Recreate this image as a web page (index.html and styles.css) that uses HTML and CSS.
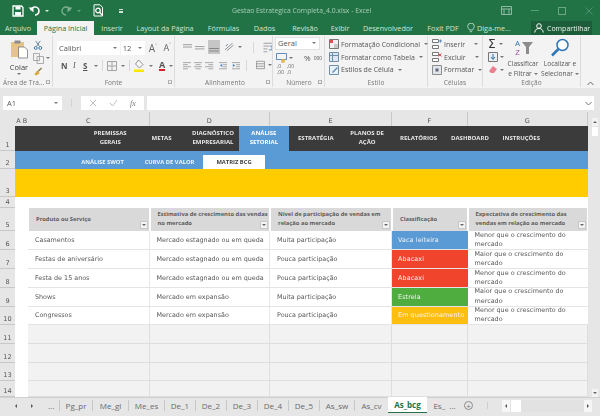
FILE: index.html
```html
<!DOCTYPE html>
<html lang="pt">
<head>
<meta charset="utf-8">
<title>Gestao Estrategica Completa_4.0.xlsx - Excel</title>
<link rel="stylesheet" href="styles.css">
</head>
<body>
<div class="app">
  <header class="titlebar">
    <div class="qat">
      <svg width="12" height="12" viewBox="0 0 12 12"><path d="M1 1h8.500L11 2.500V11H1z" fill="none" stroke="#fff" stroke-width="1.300"/><path d="M3.500 1.500h5v3h-5zM3 7h6v3.500H3z" fill="#fff"/></svg>
      <svg width="13" height="12" viewBox="0 0 13 12"><path d="M3 5.500A4 4 0 1 1 7 10" fill="none" stroke="#fff" stroke-width="1.600"/><path d="M.5 2.500h5v5z" fill="#fff"/></svg>
      <i class="caret w"></i>
      <svg class="dim" width="13" height="12" viewBox="0 0 13 12"><path d="M10 5.500A4 4 0 1 0 6 10" fill="none" stroke="#7fb093" stroke-width="1.400"/><path d="M12.500 2.500h-5v5z" fill="#7fb093"/></svg>
      <i class="caret d"></i>
      <svg width="12" height="13" viewBox="0 0 12 13"><path d="M2 .8h6l2.500 2.500V12H2z" fill="none" stroke="#fff"/><circle cx="6" cy="6.500" r="2.300" fill="none" stroke="#fff" stroke-width="1.200"/><path d="M7.500 8l2.500 3" stroke="#fff" stroke-width="1.200"/></svg>
      <span class="custom"></span>
    </div>
    <div class="doc">Gestao Estrategica Completa_4.0.xlsx - Excel</div>
    <div class="winctl">
      <svg width="11" height="9" viewBox="0 0 11 9"><path d="M.5.500h10v8H.5zM.5 3h10M3 3v5.500M8 3v5.500" fill="none" stroke="#8fbaa2"/></svg>
      <span class="min"></span>
      <span class="max"></span>
      <svg width="8" height="8" viewBox="0 0 8 8"><path d="M.5.500l7 7M7.500.500l-7 7" stroke="#4f9070"/></svg>
    </div>
  </header>

  <nav class="tabs">
    <span class="tab file">Arquivo</span>
    <span class="tab active">Página Inicial</span>
    <span class="tab tw36">Inserir</span>
    <span class="tab tw70">Layout da Página</span>
    <span class="tab tw47">Fórmulas</span>
    <span class="tab tw35">Dados</span>
    <span class="tab tw46">Revisão</span>
    <span class="tab tw24">Exibir</span>
    <span class="tab tw72">Desenvolvedor</span>
    <span class="tab tw38">Foxit PDF</span>
    <span class="tab tell">
      <svg width="8" height="10" viewBox="0 0 8 10"><path d="M2.500 7C2 5.500.7 5 .7 3.400a3.300 3.300 0 0 1 6.600 0C7.300 5 6 5.500 5.500 7zM2.800 8.700h2.400" fill="none" stroke="#d5e6dc" stroke-width=".8"/></svg>
      Diga-me...
    </span>
    <span class="share">
      <svg width="11" height="10" viewBox="0 0 11 10"><circle cx="5" cy="3" r="2.300" fill="none" stroke="#fff"/><path d="M.7 9.500c.5-3 2-4 4.300-4s3.800 1 4.300 4" fill="none" stroke="#fff"/></svg>
      Compartilhar
    </span>
  </nav>

  <section class="ribbon">
    <div class="group g-clip">
      <div class="gbody clipbody">
        <div class="paste">
          <svg width="19" height="20" viewBox="0 0 19 20"><path d="M1 3h13v15H1z" fill="#e5c587"/><path d="M4.500 1.500h6v3h-6z" fill="#8c8c8c"/><path d="M8.500 8h6l3 3v8h-9z" fill="#fff" stroke="#777" stroke-width=".8"/></svg>
          <span>Colar</span>
          <i class="caret"></i>
        </div>
        <div class="cliptools">
          <svg width="10" height="11" viewBox="0 0 10 11"><path d="M2.500 1l4 6M7.500 1l-4 6" stroke="#5e7c94" stroke-width="1"/><circle cx="2.500" cy="8.800" r="1.600" fill="none" stroke="#2f6f9f"/><circle cx="7.500" cy="8.800" r="1.600" fill="none" stroke="#2f6f9f"/></svg>
          <span class="tool"><svg width="11" height="11" viewBox="0 0 11 11"><path d="M.5.500h6v7h-6zM4 3.500h6.500v7H4z" fill="#f4f4f4" stroke="#9a9a9a" stroke-width=".8"/></svg><i class="caret"></i></span>
          <svg width="10" height="10" viewBox="0 0 10 10"><path d="M5 5l4-4" stroke="#8a7a50" stroke-width="1.500"/><path d="M1 8l3-4 3 3-4 2.500z" fill="#d9a93c"/></svg>
        </div>
      </div>
      <div class="glabel">Área de Tra...<i class="launch"></i></div>
    </div>

    <div class="group g-font">
      <div class="gbody fontbody">
        <div class="row">
          <span class="combo fname">Calibri<i class="caret"></i></span>
          <span class="combo fsize">12<i class="caret"></i></span>
          <span class="grow">A<sup>˄</sup></span>
          <span class="shrink">A<sup>˅</sup></span>
        </div>
        <div class="row fmt">
          <b class="n">N</b><em class="i">I</em><u class="s">S</u><i class="caret"></i>
          <span class="vsep"></span>
          <svg width="10" height="10" viewBox="0 0 10 10"><path d="M.5.500h9v9h-9zM5 .5v9M.5 5h9" fill="none" stroke="#a3a3a3"/></svg><i class="caret"></i>
          <span class="vsep"></span>
          <svg width="11" height="13" viewBox="0 0 11 13"><path d="M4.500 1L9 5.500 5.500 9 1.500 5z" fill="#f7f7f7" stroke="#777" stroke-width=".8"/><path d="M0 10.500h10V13H0z" fill="#ffe600"/></svg><i class="caret"></i>
          <span class="fcolor">A</span><i class="caret"></i>
        </div>
      </div>
      <div class="glabel">Fonte<i class="launch"></i></div>
    </div>

    <div class="group g-align">
      <div class="gbody alignbody">
        <div class="row a1">
          <svg class="al" width="10" height="9" viewBox="0 0 10 9"><path d="M0 1.500h10M0 4h10" stroke="#9a9a9a"/></svg>
          <svg class="al" width="10" height="9" viewBox="0 0 10 9"><path d="M0 3.500h10M0 6h10" stroke="#9a9a9a"/></svg>
          <span class="sel"><svg width="10" height="9" viewBox="0 0 10 9"><path d="M0 5.500h10M0 8h10" stroke="#888"/></svg></span>
          <svg class="orient" width="11" height="10" viewBox="0 0 11 10"><path d="M1 8l8-7M3 9l7-6" stroke="#8c8c8c"/><path d="M2 4l2-2" stroke="#5f7f9f"/></svg><i class="caret"></i>
          <span class="vsep"></span>
          <svg width="10" height="11" viewBox="0 0 10 11"><path d="M.5 1h9M.5 4h6M.5 7h4M.5 10h4" stroke="#9a9a9a"/><path d="M7 4h2.500v4H6" fill="none" stroke="#5f8fbf"/></svg>
        </div>
        <div class="row a2">
          <svg class="al" width="10" height="9" viewBox="0 0 10 9"><path d="M0 1h10M0 3.500h6M0 6h10M0 8.500h6" stroke="#9a9a9a"/></svg>
          <svg class="al" width="10" height="9" viewBox="0 0 10 9"><path d="M0 1h10M2 3.500h6M0 6h10M2 8.500h6" stroke="#9a9a9a"/></svg>
          <svg class="al" width="10" height="9" viewBox="0 0 10 9"><path d="M0 1h10M4 3.500h6M0 6h10M4 8.500h6" stroke="#9a9a9a"/></svg>
          <svg class="ind" width="10" height="9" viewBox="0 0 10 9"><path d="M0 1h10M5 3.500h5M5 6h5M0 8.500h10" stroke="#9a9a9a"/><path d="M4 2.500v4L1 4.500z" fill="#5f8fbf"/></svg>
          <svg class="ind" width="10" height="9" viewBox="0 0 10 9"><path d="M0 1h10M5 3.500h5M5 6h5M0 8.500h10" stroke="#9a9a9a"/><path d="M1 2.500v4l3-2z" fill="#5f8fbf"/></svg>
          <span class="vsep"></span>
          <svg width="11" height="10" viewBox="0 0 11 10"><path d="M.5.500h10v9H.5zM.5 3.500h10M.5 6.500h10" fill="none" stroke="#8c8c8c"/></svg><i class="caret"></i>
        </div>
      </div>
      <div class="glabel">Alinhamento<i class="launch"></i></div>
    </div>

    <div class="group g-num">
      <div class="gbody numbody">
        <span class="combo fgeral">Geral<i class="caret"></i></span>
        <div class="row n2">
          <svg width="11" height="10" viewBox="0 0 11 10"><path d="M.5.500h10v6H.5z" fill="#f4f4f4" stroke="#5f8fbf"/><circle cx="7" cy="8" r="2" fill="#e8b84a"/></svg><i class="caret"></i>
          <span class="pct">%</span><span class="mil">000</span>
        </div>
        <div class="row n3"><span class="dec">,0<br>,00</span><span class="dec">,00<br>,0</span></div>
      </div>
      <div class="glabel">Número<i class="launch"></i></div>
    </div>

    <div class="group g-style">
      <div class="gbody lines">
        <div class="line"><svg width="10" height="10" viewBox="0 0 10 10"><path d="M.5.500h9v9h-9z" fill="#f2f2f2" stroke="#777"/><path d="M1 1h3v3H1z" fill="#d9534f"/><path d="M5 5h4v4H5z" fill="#c9c9c9"/></svg>Formatação Condicional<i class="caret"></i></div>
        <div class="line"><svg width="10" height="10" viewBox="0 0 10 10"><path d="M.5.500h9v9h-9z" fill="#dbe8f4" stroke="#6f8fa8"/><path d="M.5 3.500h9M3.500.5v9" stroke="#6f8fa8"/></svg>Formatar como Tabela<i class="caret"></i></div>
        <div class="line"><svg width="10" height="10" viewBox="0 0 10 10"><path d="M.5.500h9v9h-9z" fill="#eaf1f7" stroke="#6f8fa8"/><path d="M3 7l5-5 1 1-5 5z" fill="#5f8fbf"/></svg>Estilos de Célula<i class="caret"></i></div>
      </div>
      <div class="glabel nolaunch">Estilo</div>
    </div>

    <div class="group g-cells">
      <div class="gbody lines">
        <div class="line"><svg width="10" height="10" viewBox="0 0 10 10"><path d="M.5.500h6v3h-6zM.5 6.500h6v3h-6z" fill="#fff" stroke="#777"/><path d="M7 2h3M8.500.5v3" stroke="#5f8fbf"/></svg>Inserir<i class="caret sp"></i></div>
        <div class="line"><svg width="10" height="10" viewBox="0 0 10 10"><path d="M.5.500h6v3h-6zM.5 6.500h6v3h-6z" fill="#fff" stroke="#777"/><path d="M6.500 1.500l3 3M9.500 1.500l-3 3" stroke="#d9534f"/></svg>Excluir<i class="caret sp"></i></div>
        <div class="line"><svg width="10" height="10" viewBox="0 0 10 10"><path d="M.5.500h9v9h-9z" fill="#dfe6ec" stroke="#8c8c8c"/><path d="M3.500 3.500h3v3h-3z" fill="#667"/></svg>Formatar<i class="caret"></i></div>
      </div>
      <div class="glabel nolaunch">Células</div>
    </div>

    <div class="group g-edit">
      <div class="gbody editbody">
        <div class="edittools">
          <span class="tool"><span class="sigma">Σ</span><i class="caret"></i></span>
          <span class="tool"><svg width="10" height="10" viewBox="0 0 10 10"><path d="M.5.500h9v9h-9z" fill="#e9eff5" stroke="#777"/><path d="M5 2v5M3 5l2 2.500L7 5" fill="none" stroke="#2f6f9f"/></svg><i class="caret"></i></span>
          <span class="tool"><svg width="10" height="9" viewBox="0 0 10 9"><path d="M1 6l4-5 4 3-3 4H3z" fill="#e9818e"/></svg><i class="caret"></i></span>
        </div>
        <div class="bigbtn sort">
          <span class="az"><span>A</span><span>Z</span></span>
          <svg class="funnel" width="11" height="12" viewBox="0 0 11 12"><path d="M0 0h11L7 5v7H4V5z" fill="#8c8c8c"/></svg>
          <p>Classificar<br>e Filtrar<i class="caret"></i></p>
        </div>
        <div class="bigbtn find">
          <svg width="20" height="19" viewBox="0 0 20 19"><circle cx="12.500" cy="7" r="5.500" fill="#fff" stroke="#2e75b6" stroke-width="1.500"/><path d="M8.500 11L2 17.500" stroke="#2e75b6" stroke-width="2.500"/></svg>
          <p>Localizar e<br>Selecionar<i class="caret"></i></p>
        </div>
      </div>
      <div class="glabel nolaunch">Edição</div>
    </div>
    <div class="collapse"><svg width="7" height="5" viewBox="0 0 7 5"><path d="M.5 4L3.500 1l3 3" fill="none" stroke="#666"/></svg></div>
  </section>

  <div class="formula">
    <div class="namebox">A1<i class="caret"></i></div>
    <span class="dots"></span>
    <div class="fxbox">
      <svg width="8" height="8" viewBox="0 0 8 8"><path d="M1 1l6 6M7 1L1 7" stroke="#c0c0c0"/></svg>
      <svg width="9" height="8" viewBox="0 0 9 8"><path d="M1 4l2.500 3L8 1" fill="none" stroke="#c0c0c0"/></svg>
      <em>fx</em>
    </div>
    <div class="fbar"><svg width="7" height="5" viewBox="0 0 7 5"><path d="M.5 1l3 3 3-3" fill="none" stroke="#777"/></svg></div>
  </div>

  <main class="workarea">
    <div class="sheet">
      <div class="ch corner"></div><div class="ch">A</div><div class="ch">B</div><div class="ch">C</div><div class="ch">D</div><div class="ch">E</div><div class="ch">F</div><div class="ch">G</div>

      <div class="rh">1</div>
      <div class="menu span7">
        <span>PREMISSAS<br>GERAIS</span><span>METAS</span><span>DIAGNÓSTICO<br>EMPRESARIAL</span><span class="on">ANÁLISE<br>SETORIAL</span><span>ESTRATÉGIA</span><span>PLANOS DE<br>AÇÃO</span><span>RELATÓRIOS</span><span>DASHBOARD</span><span>INSTRUÇÕES</span>
      </div>

      <div class="rh">2</div>
      <div class="submenu span7"><span>ANÁLISE SWOT</span><span>CURVA DE VALOR</span><span class="on">MATRIZ BCG</span></div>

      <div class="rh">3</div>
      <div class="banner span7"></div>

      <div class="rh">4</div>
      <div class="blank span7"></div>

      <div class="rh">5</div>
      <div class="blank span2"></div>
      <div class="th single">Produto ou Serviço<i class="filter"></i></div>
      <div class="th">Estimativa de crescimento das vendas<br>no mercado<i class="filter"></i></div>
      <div class="th">Nível de participação de vendas em<br>relação ao mercado<i class="filter"></i></div>
      <div class="th single">Classificação<i class="filter"></i></div>
      <div class="th">Expectativa de crescimento das<br>vendas em relação ao mercado<i class="filter"></i></div>

      <div class="rh">6</div><div class="blank span2"></div>
      <div class="td">Casamentos</div><div class="td">Mercado estagnado ou em queda</div><div class="td">Muita participação</div><div class="td cls blue">Vaca leiteira</div><div class="td wrap">Menor que o crescimento do mercado</div>

      <div class="rh">7</div><div class="blank span2"></div>
      <div class="td">Festas de aniversário</div><div class="td">Mercado estagnado ou em queda</div><div class="td">Pouca participação</div><div class="td cls red">Abacaxi</div><div class="td wrap">Maior que o crescimento do mercado</div>

      <div class="rh">8</div><div class="blank span2"></div>
      <div class="td">Festa de 15 anos</div><div class="td">Mercado estagnado ou em queda</div><div class="td">Pouca participação</div><div class="td cls red">Abacaxi</div><div class="td wrap">Menor que o crescimento do mercado</div>

      <div class="rh">9</div><div class="blank span2"></div>
      <div class="td">Shows</div><div class="td">Mercado em expansão</div><div class="td">Muita participação</div><div class="td cls green">Estrela</div><div class="td wrap">Maior que o crescimento do mercado</div>

      <div class="rh">10</div><div class="blank span2"></div>
      <div class="td">Congressos</div><div class="td">Mercado em expansão</div><div class="td">Pouca participação</div><div class="td cls amber">Em questionamento</div><div class="td wrap">Menor que o crescimento do mercado</div>

      <div class="rh">11</div><div class="blank span2"></div><div class="em"></div><div class="em"></div><div class="em"></div><div class="em"></div><div class="em"></div>
      <div class="rh">12</div><div class="blank span2"></div><div class="em"></div><div class="em"></div><div class="em"></div><div class="em"></div><div class="em"></div>
      <div class="rh">13</div><div class="blank span2"></div><div class="em"></div><div class="em"></div><div class="em"></div><div class="em"></div><div class="em"></div>
      <div class="rh">14</div><div class="blank span2"></div><div class="em"></div><div class="em"></div><div class="em"></div><div class="em"></div><div class="em"></div>
    </div>
    <div class="vscroll">
      <span class="sbtn"><i class="up"></i></span>
      <span class="thumb"></span>
      <span class="track"></span>
      <span class="sbtn"><i class="down"></i></span>
    </div>
  </main>

  <footer class="sheets">
    <div class="snav"><i class="l"></i><i class="r"></i><span>...</span></div>
    <span class="st w33">Pg_pr</span>
    <span class="st w36">Me_gl</span>
    <span class="st w36">Me_es</span>
    <span class="st w31">De_1</span>
    <span class="st w31">De_2</span>
    <span class="st w31">De_3</span>
    <span class="st w31">De_4</span>
    <span class="st w31">De_5</span>
    <span class="st w35">As_sw</span>
    <span class="st w34">As_cv</span>
    <span class="st cur">As_bcg</span>
    <span class="st last">Es_ &nbsp;...</span>
    <span class="plus">+</span>
    <span class="hsep"></span>
    <div class="hscroll"><span class="sbtn"><i class="l"></i></span><span class="hthumb"></span><span class="htrack"></span><span class="sbtn"><i class="r"></i></span></div>
  </footer>
</div>
</body>
</html>
```

FILE: styles.css
```css
* { box-sizing: border-box; }
html, body { margin: 0; padding: 0; background: #e6e6e6; }
.app {
  width: 600px; height: 416px; overflow: hidden;
  display: flex; flex-direction: column;
  font-family: "Open Sans", "Noto Sans", sans-serif;
  font-size: 7.5px; color: #555;
  filter: blur(.4px);
}
i { display: inline-block; font-style: normal; }
.caret { width: 0; height: 0; border: 2px solid transparent; border-top: 2.5px solid #777; border-bottom: 0; }
.caret.w { border-top-color: #dfeee5; }
.caret.d { border-top-color: #6ba383; }

/* title bar */
.titlebar { height: 21px; background: #217346; display: flex; align-items: center; position: relative; flex: none; }
.qat { display: flex; align-items: center; padding-left: 12px; width: 232px; gap: 4px; }
.qat .dim { margin-left: 7px; }
.qat svg:nth-of-type(4) { margin-left: 7px; }
.custom { width: 4px; height: 4px; margin-left: 11px; border-top: 1px solid #cfe3d7; border-bottom: 2px solid #cfe3d7; }
.doc { width: 214px; color: #a9cdb8; font-size: 6.8px; white-space: nowrap; }
.winctl { flex: 1; display: flex; align-items: center; gap: 19px; padding-left: 55px; }
.min { width: 8px; height: 1px; background: #5d9c7c; }
.max { width: 8px; height: 8px; border: 1px solid #6ba686; }

/* tabs */
.tabs { height: 14px; background: #217346; display: flex; align-items: stretch; flex: none; color: #cfe3d7; font-size: 7.2px; white-space: nowrap; }
.tab { display: flex; align-items: center; justify-content: center; flex: none; }
.tab.file { width: 37px; justify-content: flex-start; padding-left: 5px; }
.tab.active { width: 57px; background: #f3f3f3; color: #217346; }
.tw24 { width: 24px; } .tw35 { width: 35px; } .tw36 { width: 36px; } .tw38 { width: 38px; }
.tw46 { width: 46px; } .tw47 { width: 47px; } .tw70 { width: 70px; } .tw72 { width: 72px; }
.tab.tell { width: 69px; gap: 2px; padding-left: 5px; justify-content: flex-start; }
.share { flex: none; width: 61px; background: #1b5e39; color: #f0f6f2; display: flex; align-items: center; gap: 2px; padding-left: 3px; font-size: 7px; }

/* ribbon */
.ribbon { height: 53px; background: #f3f3f3; display: flex; flex: none; position: relative; }
.group { display: flex; flex-direction: column; border-right: 1px solid #dcdcdc; margin: 1px 0 1px; flex: none; }
.gbody { flex: 1; min-height: 0; }
.glabel { height: 11px; text-align: center; font-size: 6.5px; color: #777; position: relative; line-height: 13px; letter-spacing: .1px; flex: none; }
.launch { position: absolute; right: 2px; top: 4px; width: 4px; height: 4px; border: 1px solid #aaa; border-top-color: #bbb; }
.row { display: flex; align-items: center; }
.vsep { width: 1px; height: 11px; background: #d8d8d8; }
.g-clip { width: 53px; }
.g-clip .glabel { text-align: left; padding-left: 3px; }
.clipbody { display: flex; padding: 3px 0 0 9px; }
.paste { width: 20px; display: flex; flex-direction: column; align-items: center; font-size: 7.5px; color: #444; gap: 1px; }
.paste span { margin-top: 2px; line-height: 10px; }
.cliptools { display: flex; flex-direction: column; gap: 3px; margin-left: 4px; padding-top: 1px; }
.tool { display: flex; align-items: center; gap: 2px; }

.g-font { width: 122px; }
.fontbody { padding: 5px 0 0 4px; }
.combo { display: flex; align-items: center; justify-content: space-between; background: #fff; height: 14px; padding: 0 3px 0 2px; color: #555; font-size: 7.5px; }
.fname { width: 65px; }
.fsize { width: 25px; margin-left: 1px; }
.grow, .shrink { color: #666; margin-left: 4px; font-size: 9px; line-height: 10px; width: 11px; }
.grow { margin-left: 4px; font-size: 10px; }
.grow sup, .shrink sup { font-size: 5px; vertical-align: 4px; line-height: 0; }
.fmt { margin-top: 4px; height: 13px; gap: 4px; padding-left: 4px; }
.n { font-size: 8px; color: #555; width: 8px; }
.i { font-size: 8px; font-family: "Liberation Serif", serif; width: 6px; }
.s { font-size: 8px; font-weight: 700; width: 7px; }
.fcolor { color: #555; font-weight: 700; font-size: 9px; border-bottom: 2px solid #d8202a; line-height: 9px; margin-left: 2px; }

.g-align { width: 98px; padding-left: 3px; }
.alignbody { padding: 4px 0 0 5px; display: flex; flex-direction: column; }
.a1 { height: 14px; gap: 3px; }
.sel { width: 13px; height: 14px; background: #c6c6c6; display: flex; align-items: center; justify-content: center; }
.orient { margin-left: 1px; }
.a1 .vsep { margin: 0 6px 0 8px; }
.a2 { margin-top: 5px; height: 12px; gap: 3px; }
.a2 .ind { margin-left: 2px; }
.a2 .vsep { margin: 0 6px 0 3px; }
.g-num { width: 52px; padding-left: 1px; }
.numbody { padding: 1px 0 0 1px; display: flex; flex-direction: column; }
.fgeral { width: 45px; height: 13px; border: 1px solid #e2e2e2; }
.n2 { margin-top: 2px; height: 12px; gap: 2px; padding-left: 1px; font-size: 6.5px; }
.pct { margin-left: 9px; font-size: 8px; }
.mil { font-size: 5px; margin-left: 1px; }
.n3 { height: 13px; gap: 3px; padding-left: 2px; }
.dec { font-size: 5px; line-height: 5.500px; color: #666; }
.g-style { width: 103px; }
.g-cells { width: 55px; }
.lines { display: flex; flex-direction: column; padding: 2px 0 0 4px; }
.line { display: flex; align-items: center; gap: 2px; height: 14px; font-size: 7px; color: #555; white-space: nowrap; }
.line svg { flex: none; }
.line .caret { margin-left: 2px; }
.line .caret.sp { margin-left: 7px; }
.g-edit { width: 98px; }
.editbody { display: flex; padding: 1px 0 0 5px; }
.edittools { display: flex; flex-direction: column; width: 17px; }
.edittools .tool { height: 14px; }
.sigma { font-size: 12px; line-height: 12px; color: #333; width: 9px; font-family: "DejaVu Sans", sans-serif; }
.bigbtn { position: relative; text-align: center; height: 42px; flex: none; }
.bigbtn p { margin: 0; font-size: 6.6px; line-height: 10px; color: #555; white-space: nowrap; position: absolute; left: 0; right: 0; top: 22px; }
.bigbtn p .caret { margin-left: 2px; vertical-align: 1px; }
.sort { width: 32px; margin-left: 3px; }
.az { position: absolute; left: 8px; top: 1px; display: flex; flex-direction: column; font-size: 8px; line-height: 9px; color: #2e75b6; }
.az span + span { color: #9b4e9b; }
.funnel { position: absolute; left: 15px; top: 5px; }
.find { width: 42px; }
.find svg { margin-top: 1px; }
.collapse { flex: 1; position: relative; display: flex; align-items: flex-end; justify-content: center; padding-bottom: 2px; }

/* formula bar */
.formula { height: 24px; flex: none; background: #e6e6e6; display: flex; padding: 8px 6px 2px 3px; align-items: stretch; }
.namebox { width: 59px; background: #fff; display: flex; align-items: center; justify-content: space-between; padding: 0 4px; font-size: 7.500px; color: #555; }
.dots { width: 1px; margin: 3px 9px 3px 9px; background: #d2d2d2; }
.fxbox { width: 63px; background: #fff; display: flex; align-items: center; gap: 12px; padding-left: 8px; }
.fxbox em { font-family: "Liberation Serif", serif; font-size: 8px; color: #777; }
.fbar { flex: 1; margin-left: 3px; background: #fff; display: flex; align-items: center; justify-content: flex-end; padding-right: 2px; }

/* sheet */
.workarea { flex: none; height: 285px; display: flex; }
.sheet {
  width: 588px; height: 285px; overflow: hidden; flex: none;
  display: grid;
  grid-template-columns: 15px 7px 6px 121.500px 120.500px 122px 75.500px 120.500px;
  grid-template-rows: 14px 24.500px 18.500px 28px 11px 23px 19px 19px 19px 18.500px 18.500px 19px 18.500px 18.500px 16px;
  font-family: "DejaVu Sans", sans-serif; font-size: 6.4px; color: #595959;
  background: #fff;
}
.ch { background: #e6e6e6; display: flex; align-items: center; justify-content: center; font-size: 6.500px; color: #555; border-right: 1px solid #c8c8c8; padding-top: 3px; }
.ch.corner { border-right: 0; }
.ch:nth-child(2), .ch:nth-child(3) { border-right: 0; }
.rh { background: #e6e6e6; display: flex; align-items: flex-end; justify-content: center; font-size: 6.500px; color: #555; border-bottom: 1px solid #c8c8c8; line-height: 8px; padding-bottom: 1px; }
.span7 { grid-column: span 7; }
.span2 { grid-column: span 2; }
.menu {
  background: #3b3b3b; color: #e8e8e8; display: grid;
  grid-template-columns: 69.5px repeat(9, 51.400px); align-items: center;
  font-family: "Open Sans", sans-serif; font-weight: 700; font-size: 6px; line-height: 9px; text-align: center;
}
.menu span { white-space: nowrap; height: 100%; display: flex; align-items: center; justify-content: center; }
.menu span:first-child { grid-column: 2; }
.menu .on { background: #5b9bd5; color: #fff; margin-right: 1px; }
.submenu {
  background: #5b9bd5; display: grid; grid-template-columns: 54px 67px 67px 62px;
  font-family: "Open Sans", sans-serif; font-weight: 700; font-size: 5.800px; color: #f0f6fb; text-align: center; padding-top: 4.500px;
}
.submenu span { display: flex; align-items: center; justify-content: center; white-space: nowrap; }
.submenu span:first-child { grid-column: 2; }
.submenu .on { background: #fff; color: #404040; }
.banner { background: #ffcc00; }
.blank { background: #fff; }
.th {
  background: #d9d9d9; border-right: 1px solid #fff; border-left: 1px solid #fff; position: relative; display: block;
  padding: 1.500px 1px 0 7px; font-family: "Open Sans", sans-serif; font-weight: 700; font-size: 5.800px; line-height: 9.500px; color: #5c5c5c; white-space: nowrap;
}
.th.single { padding-top: 6.500px; }
.filter { position: absolute; right: 1px; bottom: 2px; width: 8px; height: 8px; background: #f3f3f3; border: 1px solid #c8c8c8; }
.filter::after { content: ""; position: absolute; left: 1px; top: 2px; border: 2px solid transparent; border-top: 2.500px solid #666; border-bottom: 0; }
.td { background: #fff; display: flex; align-items: center; padding-left: 7px; border-bottom: 1px solid #e4e4e4; border-right: 1px solid #e8e8e8; white-space: nowrap; }
.wrap { white-space: normal; line-height: 9.300px; padding-right: 8px; border-right: 0; }
.cls { color: #f3f3f3; border-right: 0; padding-left: 6px; letter-spacing: .1px; }
.blue { background: #5b9bd5; }
.red { background: #f0442c; }
.green { background: #4fac3f; }
.amber { background: #fdbf0f; }
.em { background: #f2f2f2; border-bottom: 1px solid #dedede; border-right: 1px solid #dedede; }
.vscroll { flex: 1; background: #e6e6e6; display: flex; flex-direction: column; padding: 6px 2px 0 4px; align-items: stretch; }
.vscroll .sbtn { height: 8px; background: #f3f3f3; display: flex; align-items: center; justify-content: center; }
.up { border: 2px solid transparent; border-bottom: 2.500px solid #666; border-top: 0; }
.down { border: 2px solid transparent; border-top: 2.500px solid #666; border-bottom: 0; }
.thumb { height: 9px; margin-top: 1px; background: #fff; }
.track { flex: 1; }

/* sheet tabs */
.sheets { height: 19px; flex: none; background: #e6e6e6; display: flex; align-items: stretch; border-top: 1px solid #d0d0d0; padding-bottom: 3px; font-size: 8px; color: #6a6a6a; white-space: nowrap; }
.snav { width: 59px; display: flex; align-items: center; padding-left: 15px; gap: 14px; flex: none; }
.snav span { margin-left: 1px; }
.l { border: 2px solid transparent; border-right: 2.500px solid #555; border-left: 0; }
.r { border: 2px solid transparent; border-left: 2.500px solid #555; border-right: 0; }
.st { display: flex; align-items: center; justify-content: center; border-left: 1px solid #c8c8c8; margin: 2px 0; flex: none; }
.w33 { width: 33px; } .w36 { width: 36px; } .w31 { width: 31px; } .w35 { width: 35px; } .w34 { width: 34px; }
.st.cur { width: 39px; background: #fff; color: #217346; font-weight: 700; border: 0; border-bottom: 1px solid #217346; margin: -1px 0 0; }
.st.last { width: 35px; border: 0; }
.plus { flex: none; width: 9px; height: 9px; margin: 3px 0 0 2px; border: 1px solid #8c8c8c; border-radius: 50%; display: flex; align-items: center; justify-content: center; font-size: 8px; line-height: 7px; color: #777; }
.hsep { flex: none; width: 1px; margin: 4px 14px 4px 14px; background: #cfcfcf; }
.hscroll { width: 90px; margin: 2px 0 1px 0; display: flex; align-items: stretch; background: #e2e2e2; flex: none; }
.hscroll .sbtn { width: 8px; background: #f6f6f6; display: flex; align-items: center; justify-content: center; }
.hthumb { width: 10px; background: #fff; margin-left: 1px; }
.htrack { flex: 1; }
```
